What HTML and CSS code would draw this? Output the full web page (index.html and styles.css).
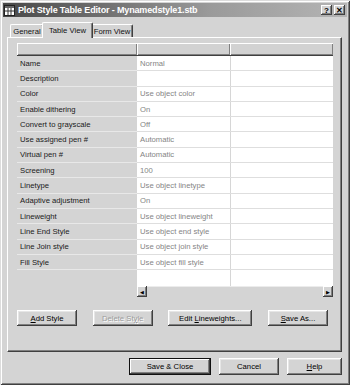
FILE: index.html
```html
<!DOCTYPE html>
<html lang="en">
<head>
    <meta charset="UTF-8">
    <title>Plot Style Table Editor</title>
    <link rel="stylesheet" href="styles.css">
</head>
<body>
    <div class="window">
        <div class="titlebar">
            <svg class="title-icon" width="11" height="11" viewBox="0 0 11 11">
                <rect x="0.5" y="0.5" width="10" height="10" fill="#fff" stroke="#222"/>
                <rect x="1" y="1" width="9" height="2" fill="#666"/>
                <path d="M4 3v7M1 6h9M7 3v7" stroke="#333" stroke-width="1"/>
            </svg>
            <span class="title-text">Plot Style Table Editor - Mynamedstyle1.stb</span>
            <span class="title-btns">
                <span class="title-btn">?</span>
                <span class="title-btn">✕</span>
            </span>
        </div>

        <div class="body">
            <div class="tabs">
                <div class="tab tab-general">General</div>
                <div class="tab tab-table active">Table View</div>
                <div class="tab tab-form">Form View</div>
            </div>

            <div class="panel">
                <div class="grid">
                    <div class="grid-head">
                        <div class="head-cell"></div>
                        <div class="head-cell"></div>
                        <div class="head-cell"></div>
                    </div>
                    <div class="row"><div class="label">Name</div><div class="value">Normal</div><div class="value"></div></div>
                    <div class="row"><div class="label">Description</div><div class="value"></div><div class="value"></div></div>
                    <div class="row"><div class="label">Color</div><div class="value">Use object color</div><div class="value"></div></div>
                    <div class="row"><div class="label">Enable dithering</div><div class="value">On</div><div class="value"></div></div>
                    <div class="row"><div class="label">Convert to grayscale</div><div class="value">Off</div><div class="value"></div></div>
                    <div class="row"><div class="label">Use assigned pen #</div><div class="value">Automatic</div><div class="value"></div></div>
                    <div class="row"><div class="label">Virtual pen #</div><div class="value">Automatic</div><div class="value"></div></div>
                    <div class="row"><div class="label">Screening</div><div class="value">100</div><div class="value"></div></div>
                    <div class="row"><div class="label">Linetype</div><div class="value">Use object linetype</div><div class="value"></div></div>
                    <div class="row"><div class="label">Adaptive adjustment</div><div class="value">On</div><div class="value"></div></div>
                    <div class="row"><div class="label">Lineweight</div><div class="value">Use object lineweight</div><div class="value"></div></div>
                    <div class="row"><div class="label">Line End Style</div><div class="value">Use object end style</div><div class="value"></div></div>
                    <div class="row"><div class="label">Line Join style</div><div class="value">Use object join style</div><div class="value"></div></div>
                    <div class="row"><div class="label">Fill Style</div><div class="value">Use object fill style</div><div class="value"></div></div>
                    <div class="grid-fill"></div>
                    <div class="hscroll">
                        <div class="arrow">◀</div>
                        <div class="track"></div>
                        <div class="arrow">▶</div>
                    </div>
                </div>

                <div class="actions">
                    <button class="btn btn-add"><u>A</u>dd Style</button>
                    <button class="btn btn-delete" disabled>Delete St<u>y</u>le</button>
                    <button class="btn btn-lw">Edit <u>L</u>ineweights...</button>
                    <button class="btn btn-save"><u>S</u>ave As...</button>
                </div>
            </div>

            <div class="footer">
                <button class="btn btn-default btn-close">Save &amp; Close</button>
                <button class="btn btn-cancel">Cancel</button>
                <button class="btn btn-help"><u>H</u>elp</button>
            </div>
        </div>
    </div>
</body>
</html>
```

FILE: styles.css
```css
/* classic dialog, greyscale */
* { box-sizing: border-box; }
body { margin: 0; background: #d4d4d4; font-family: "Liberation Sans", Arial, sans-serif; font-size: 7.7px; color: #111; }

.window {
    width: 350px;
    height: 385px;
    padding: 3px;
    background: #d4d4d4;
    box-shadow: inset 1px 1px #dcdcdc, inset -1px -1px #404040, inset 2px 2px #fff, inset -2px -2px #808080;
}

/* title bar */
.titlebar {
    height: 14px;
    display: flex;
    align-items: center;
    padding: 0 2px 0 1px;
    background: linear-gradient(to right, #484848, #9a9a9a 60%, #b4b4b4);
}
.title-icon { flex: none; margin-right: 3px; }
.title-text { color: #fff; font-weight: bold; font-size: 9px; letter-spacing: -0.15px; white-space: nowrap; flex: 1; }
.title-btns { display: flex; gap: 2px; }
.title-btn {
    width: 11px;
    height: 10px;
    display: flex;
    align-items: center;
    justify-content: center;
    background: #d4d4d4;
    font-weight: bold;
    font-size: 8px;
    color: #000;
    box-shadow: inset -1px -1px #404040, inset 1px 1px #fff, inset -2px -2px #808080;
}

/* tabs */
.body { margin: 0 5px 0 4px; }
.tabs { display: flex; align-items: flex-end; height: 20px; padding-left: 3px; }
.tab {
    height: 13px;
    display: flex;
    align-items: center;
    justify-content: center;
    border: 1px solid #fff;
    border-right-color: #404040;
    border-bottom: none;
    border-radius: 2px 2px 0 0;
    box-shadow: inset -1px 0 #808080;
    background: #d4d4d4;
}
.tab-general { width: 34px; }
.tab-table { width: 47px; }
.tab-form { width: 42px; }
.tab.active { width: 51px; height: 16px; margin: 0 -2px -1px; position: relative; z-index: 1; }

.panel {
    height: 315px;
    padding: 5px 0 0 9px;
    border: 1px solid #fff;
    border-right-color: #404040;
    border-bottom-color: #404040;
    box-shadow: inset -1px -1px #808080;
}

/* property grid */
.grid {
    width: 316px;
    height: 254px;
    display: flex;
    flex-direction: column;
    background:
        linear-gradient(to right, transparent 213px, #d6d6d6 213px, #d6d6d6 214px, transparent 214px),
        linear-gradient(to right, #d4d4d4 120px, #fff 120px);
}
.grid-head, .row { display: grid; grid-template-columns: 120px 93px 1fr; }
.grid-head { height: 13px; border-bottom: 1px solid #404040; }
.head-cell { background: #d2d2d2; box-shadow: inset 1px 1px #fff, inset -1px -1px #808080; }
.row { height: 15.3px; flex: none; }
.label, .value { display: flex; align-items: center; white-space: nowrap; overflow: hidden; }
.label { padding-left: 3px; border-bottom: 1px solid #e8e8e8; color: #1a1a1a; }
.value { padding-left: 3px; border-bottom: 1px solid #dedede; color: #858585; }
.grid-fill { flex: 1; }

.hscroll { height: 11px; margin-left: 120px; display: flex; background: #d4d4d4; }
.arrow {
    width: 10px;
    display: flex;
    align-items: center;
    justify-content: center;
    font-size: 5px;
    color: #000;
    box-shadow: inset -1px -1px #404040, inset 1px 1px #fff, inset -2px -2px #808080;
}
.track { flex: 1; border-top: 1px solid #ececec; }

/* buttons */
.btn {
    height: 16px;
    padding: 0;
    border: none;
    background: #d4d4d4;
    font: inherit;
    color: #000;
    box-shadow: inset -1px -1px #404040, inset 1px 1px #fff, inset -2px -2px #808080, inset 2px 2px #e6e6e6;
}
.btn:disabled { color: #9c9c9c; text-shadow: 1px 1px #fff; }
.btn-default { box-shadow: inset 0 0 0 1px #111, inset -2px -2px #404040, inset 2px 2px #fff, inset -3px -3px #808080; }

.actions { width: 311px; margin-top: 13px; display: flex; justify-content: space-between; }
.btn-add, .btn-delete, .btn-save { width: 60px; }
.btn-lw { width: 84px; }

.footer { display: flex; justify-content: flex-end; gap: 8px; margin-top: 6px; }
.footer .btn { height: 17px; }
.btn-close { width: 82px; }
.btn-cancel { width: 60px; }
.btn-help { width: 55px; }
```
